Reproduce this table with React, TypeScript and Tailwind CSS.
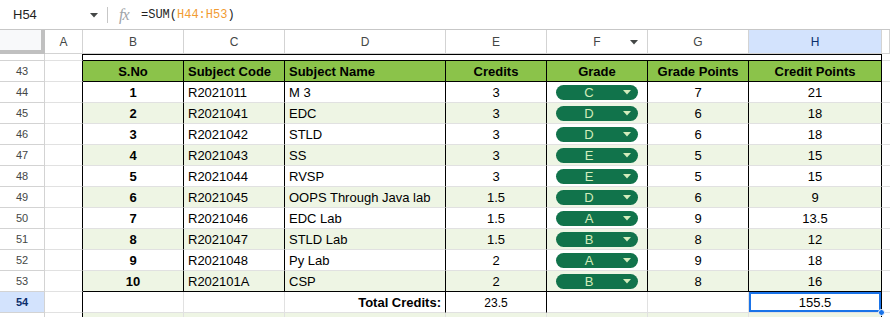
import React from "react";

const W = [
  "w-[45px]",
  "w-[38px]",
  "w-[101px]",
  "w-[101px]",
  "w-[161px]",
  "w-[101px]",
  "w-[101px]",
  "w-[101px]",
  "w-[133px]",
  "w-[8px]",
];

const rows: [number, string, string, string, string, string, string][] = [
  [1, "R2021011", "M 3", "3", "C", "7", "21"],
  [2, "R2021041", "EDC", "3", "D", "6", "18"],
  [3, "R2021042", "STLD", "3", "D", "6", "18"],
  [4, "R2021043", "SS", "3", "E", "5", "15"],
  [5, "R2021044", "RVSP", "3", "E", "5", "15"],
  [6, "R2021045", "OOPS Through Java lab", "1.5", "D", "6", "9"],
  [7, "R2021046", "EDC Lab", "1.5", "A", "9", "13.5"],
  [8, "R2021047", "STLD Lab", "1.5", "B", "8", "12"],
  [9, "R2021048", "Py Lab", "2", "A", "9", "18"],
  [10, "R202101A", "CSP", "2", "B", "8", "16"],
];

function Caret({ color, className }: { color: string; className?: string }) {
  return (
    <svg width="8" height="5" viewBox="0 0 8 5" className={className}>
      <path d="M0 0 L8 0 L4 4.5 Z" fill={color} />
    </svg>
  );
}

function Chip({ g }: { g: string }) {
  return (
    <div className="relative mx-auto flex h-[15px] w-[82px] items-center rounded-full bg-[#11734b]">
      <span className="w-[66px] text-center text-[13px] leading-none text-[#d4edbc]">{g}</span>
      <Caret color="#d4edbc" className="absolute right-[7px] top-[5px]" />
    </div>
  );
}

function RowHead({ n, sel }: { n: string; sel?: boolean }) {
  return (
    <div
      className={
        "flex shrink-0 items-center justify-center border-b border-r border-[#d3d3d3] pt-[1px] text-[11px] " +
        W[0] +
        (sel ? " bg-[#d3e3fd] font-bold text-[#0b2e6b]" : " bg-white text-[#444746]")
      }
    >
      {n}
    </div>
  );
}

export default function App() {
  return (
    <div className="h-[317px] w-[890px] overflow-hidden bg-white font-['Liberation_Sans',Arial,sans-serif] text-[#000]">
      {/* formula bar */}
      <div className="flex h-[30px] items-center border-b border-[#c7c7c7] pt-[1px]">
        <div className="w-[90px] pl-[13px] text-[13px] text-[#1f1f1f]">H54</div>
        <Caret color="#444746" />
        <div className="ml-[9px] h-[16px] w-px bg-[#c7c7c7]" />
        <div className="ml-[11px] w-[22px] font-['Liberation_Serif',serif] text-[16px] italic tracking-[-1px] text-[#a0a4a8]">
          fx
        </div>
        <div className="font-['Liberation_Mono',monospace] text-[12px] text-[#1f1f1f]">
          =SUM(<span className="text-[#f29b31]">H44:H53</span>)
        </div>
      </div>

      {/* column headers */}
      <div className="flex h-[24px]">
        <div className="w-[45px] shrink-0 border-b-4 border-r-4 border-[#c0c0c0] bg-[#f8f9fa]" />
        {["A", "B", "C", "D", "E", "F", "G", "H", ""].map((c, i) => (
          <div
            key={i}
            className={
              "relative flex shrink-0 items-center justify-center border-b border-r border-[#d3d3d3] text-[12px] " +
              W[i + 1] +
              (c === "H" ? " bg-[#d3e3fd] text-[#0b2e6b]" : " bg-white text-[#444746]")
            }
          >
            {c}
            {c === "F" && <Caret color="#444746" className="absolute right-[9px] top-[10px]" />}
          </div>
        ))}
      </div>

      {/* spacer row (partially visible) */}
      <div className="flex h-[7px]">
        <div className="w-[45px] shrink-0 border-b border-r border-[#d3d3d3]" />
        <div className="w-[38px] shrink-0 border-b border-r border-r-black border-b-[#e1e1e1]" />
        <div className="w-[799px] shrink-0 border-b border-r border-t border-black" />
        <div className="w-[8px] shrink-0 border-b border-[#e1e1e1]" />
      </div>

      {/* header row 43 */}
      <div className="flex h-[21px]">
        <RowHead n="43" />
        <div className="w-[38px] shrink-0 border-b border-r border-b-[#e1e1e1] border-r-black" />
        {["S.No", "Subject Code", "Subject Name", "Credits", "Grade", "Grade Points", "Credit Points"].map(
          (h, i) => (
            <div
              key={h}
              className={
                "flex shrink-0 items-center border-b border-r border-black bg-[#8bc34a] pt-[1px] text-[13px] font-bold " +
                W[i + 2] +
                (i === 1 || i === 2 ? " pl-[4px]" : " justify-center")
              }
            >
              {h}
            </div>
          )
        )}
        <div className="w-[8px] shrink-0 border-b border-[#e1e1e1]" />
      </div>

      {/* data rows */}
      {rows.map((r, idx) => {
        const bg = idx % 2 === 1 ? " bg-[#eef5e4]" : " bg-white";
        const last = idx === rows.length - 1;
        const bb = last ? " border-b-black" : " border-b-[#e1e1e1]";
        const cell = "flex shrink-0 items-center border-b border-r border-r-black pt-[1px] text-[13px]" + bg + bb + " ";
        return (
          <div key={idx} className="flex h-[21px]">
            <RowHead n={String(44 + idx)} />
            <div className={"w-[38px] shrink-0 border-b border-r border-b-[#e1e1e1] border-r-black bg-white"} />
            <div className={cell + W[2] + " justify-center font-bold"}>{r[0]}</div>
            <div className={cell + W[3] + " pl-[4px]"}>{r[1]}</div>
            <div className={cell + W[4] + " pl-[4px]"}>{r[2]}</div>
            <div className={cell + W[5] + " justify-center text-[12px]"}>{r[3]}</div>
            <div className={cell + W[6]}>
              <Chip g={r[4]} />
            </div>
            <div className={cell + W[7] + " justify-center"}>{r[5]}</div>
            <div className={cell + W[8] + " justify-center"}>{r[6]}</div>
            <div className="w-[8px] shrink-0 border-b border-[#e1e1e1]" />
          </div>
        );
      })}

      {/* total row 54 */}
      <div className="flex h-[21px]">
        <RowHead n="54" sel />
        <div className="w-[38px] shrink-0 border-b border-r border-b-[#e1e1e1] border-r-black" />
        <div className="w-[101px] shrink-0 border-b border-r border-[#e1e1e1]" />
        <div className="w-[101px] shrink-0 border-b border-r border-[#e1e1e1]" />
        <div className="flex w-[161px] shrink-0 items-center justify-end border-b border-r border-b-[#e1e1e1] border-r-black pr-[4px] pt-[1px] text-[13px] font-bold">
          Total Credits:
        </div>
        <div className="flex w-[101px] shrink-0 items-center justify-center border-b border-r border-b-[#e1e1e1] border-r-black pt-[1px] text-[12px]">
          23.5
        </div>
        <div className="w-[101px] shrink-0 border-b border-r border-[#e1e1e1]" />
        <div className="w-[101px] shrink-0 border-b border-r border-[#e1e1e1]" />
        <div className="relative flex w-[133px] shrink-0 items-center justify-center border-b border-r border-b-[#e1e1e1] border-r-black pt-[1px] text-[13px]">
          155.5
          <div className="absolute inset-0 border-2 border-[#1a73e8]" />
          <div className="absolute bottom-[-4px] right-[-4px] h-[7px] w-[7px] rounded-full border border-white bg-[#1a73e8]" />
        </div>
        <div className="w-[8px] shrink-0 border-b border-[#e1e1e1]" />
      </div>

      {/* partial row 55 */}
      <div className="flex h-[10px]">
        <RowHead n="" />
        <div className="w-[38px] shrink-0 border-r border-r-black" />
        <div className="w-[101px] shrink-0 border-r border-[#e1e1e1] bg-[#eef5e4]" />
        <div className="w-[101px] shrink-0 border-r border-[#e1e1e1] bg-[#eef5e4]" />
        <div className="w-[161px] shrink-0 border-r border-[#e1e1e1] bg-[#eef5e4]" />
        <div className="w-[101px] shrink-0 border-r border-[#e1e1e1] bg-[#eef5e4]" />
        <div className="w-[101px] shrink-0 border-r border-[#e1e1e1] bg-[#eef5e4]" />
        <div className="w-[101px] shrink-0 border-r border-[#e1e1e1] bg-[#eef5e4]" />
        <div className="w-[133px] shrink-0 border-r border-black bg-[#eef5e4]" />
        <div className="w-[8px] shrink-0" />
      </div>
    </div>
  );
}
